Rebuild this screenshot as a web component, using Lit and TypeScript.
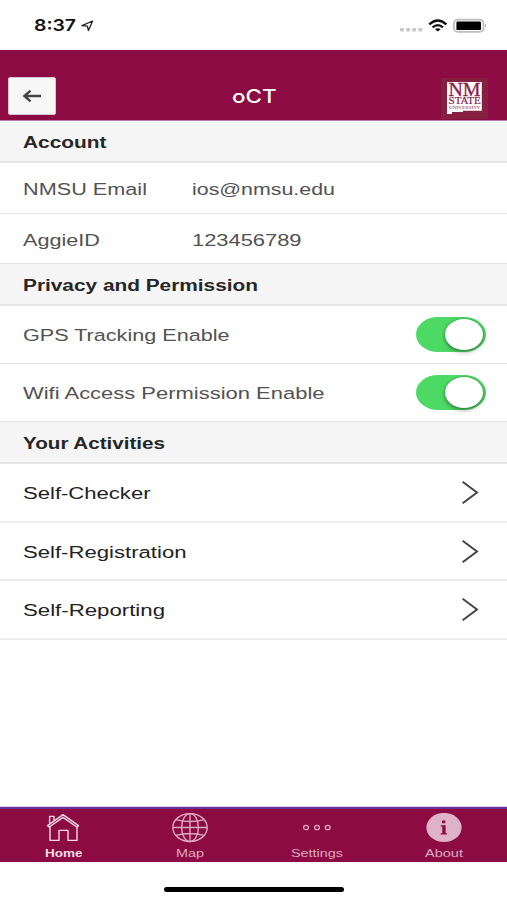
import { LitElement, html, svg, css } from "lit";
import { customElement, property } from "lit/decorators.js";

/* Wide label: real text fitted to a given advance width. */
@customElement("wide-label")
class WideLabel extends LitElement {
  @property() text = "";
  @property({ type: Number }) w = 100;
  @property({ type: Number }) h = 24;
  @property({ type: Number }) base = 18.8;
  static styles = css`
    :host { display: block; flex: none; }
    svg { display: block; overflow: visible; }
    text { fill: currentColor; }
  `;
  render() {
    return html`<svg width=${this.w} height=${this.h}>
      <text x="0" y=${this.base} textLength=${this.w} lengthAdjust="spacingAndGlyphs">${this.text}</text>
    </svg>`;
  }
}

const wide = (text: string, w: number, h = 24, base = 18.8) =>
  html`<wide-label .text=${text} .w=${w} .h=${h} .base=${base}></wide-label>`;

const homeIcon = svg`
  <g fill="none" stroke="#f3dce6" stroke-width="1.4" stroke-linejoin="round">
    <path d="M2.5 12.6 18 1.6 33.5 12.6 31.8 14 18 4.4 4.2 14Z"/>
    <path d="M4.6 10.6V3.4H9V7.6"/>
    <path d="M5 13.6V27.4H14V17.4H23V27.4H32V13.6"/>
  </g>`;
const globeIcon = svg`
  <g fill="none" stroke="#dca9c1" stroke-width="1.4">
    <ellipse cx="18" cy="14.5" rx="17.2" ry="14"/>
    <ellipse cx="18" cy="14.5" rx="8.4" ry="14"/>
    <path d="M18 .5V28.5M.8 14.5H35.2M3.8 6.6Q18 10.4 32.2 6.6M3.8 22.4Q18 18.6 32.2 22.4"/>
  </g>`;
const dotsIcon = svg`
  <g fill="none" stroke="#dca9c1" stroke-width="1.3">
    <ellipse cx="7" cy="14.5" rx="2.4" ry="2.2"/>
    <ellipse cx="18" cy="14.5" rx="2.4" ry="2.2"/>
    <ellipse cx="28.7" cy="14.5" rx="2.4" ry="2.2"/>
  </g>`;
const infoIcon = svg`
  <ellipse cx="18" cy="14.5" rx="17.6" ry="14.6" fill="#deb3c8"/>
  <ellipse cx="17.7" cy="8.8" rx="1.9" ry="1.6" fill="#8c0b42"/>
  <path d="M14.7 12.2H19.6V20.2H21V21.4H14.7V20.2H16.3V13.4H14.7Z" fill="#8c0b42"/>`;

const tabs = [
  { name: "Home", w: 37.5, icon: homeIcon, active: true },
  { name: "Map", w: 28, icon: globeIcon, active: false },
  { name: "Settings", w: 52, icon: dotsIcon, active: false },
  { name: "About", w: 38, icon: infoIcon, active: false },
];

@customElement("app-root")
class AppRoot extends LitElement {
  static styles = css`
    :host {
      display: flex; flex-direction: column; width: 507px; height: 900px;
      background: #fff; overflow: hidden;
      font-family: "Liberation Sans", Arial, sans-serif; font-size: 17.4px; color: #525252;
    }
    svg { display: block; flex: none; }
    .status {
      height: 50px; box-sizing: border-box; flex: none; display: flex; align-items: flex-start;
      padding: 13px 20px 0 34px; color: #111;
      font-family: Inter, sans-serif; font-weight: 600; font-size: 16px;
    }
    .spacer { flex: 1; }
    .loc { margin: 7px 0 0 5px; }
    .nav {
      height: 71px; flex: none; box-sizing: border-box; display: grid;
      grid-template-columns: 1fr auto 1fr; align-items: start;
      background: #8c0b42; border-bottom: 1px solid #b27fae; padding: 27px 19px 0 8px;
    }
    .back {
      width: 48px; height: 38px; padding: 0; border: 1px solid #d9c3cd; border-radius: 2px;
      background: #f7f7f7; display: flex; align-items: center; justify-content: center;
    }
    .title {
      color: #fff; font-family: Inter, sans-serif; font-weight: 500; font-size: 18.4px;
      margin: 7px 0 0 12px;
    }
    .logo { justify-self: end; margin-top: 1px; }
    .head, .row {
      box-sizing: border-box; flex: none; display: flex; align-items: center;
      padding: 0 21px 0 22.5px; border-bottom: 1px solid #e3e3e3;
    }
    .head {
      height: 42px; background: #f5f5f5; color: #262626; font-weight: 700; font-size: 17.2px;
      border-bottom: 2px solid #e6e6e6;
    }
    .short { height: 51px; }
    .last { height: 50px; }
    .switchrow { height: 58px; }
    .link { height: 58.5px; color: #222; padding-right: 28px; border-bottom: 2px solid #ededed; }
    .key { width: 169px; flex: none; }
    .switch {
      width: 70px; height: 35px; box-sizing: border-box; border-radius: 22px / 17.5px;
      background: #4cd964; padding: 2px 3px 2px 29px; flex: none; margin-top: -1px;
    }
    .knob {
      width: 38px; height: 31px; border-radius: 50%; background: #fff;
      box-shadow: 0 2px 4px rgba(0, 0, 0, .38), 0 0 2px rgba(0, 0, 0, .25);
    }
    .tabs {
      height: 55px; flex: none; box-sizing: border-box; display: grid;
      grid-template-columns: repeat(4, 1fr);
      background: #8c0b42; border-top: 2px solid #67309a; box-shadow: 0 -1px 0 #d9d2e0;
    }
    .tab {
      display: flex; flex-direction: column; align-items: center; padding-top: 4px;
      color: #dca9c1; font-size: 11.6px;
    }
    .active { color: #f3dce6; font-weight: 700; }
    .tab svg { margin-bottom: 3px; }
    .bottom { height: 38px; flex: none; display: flex; justify-content: center; }
    .bar { width: 180px; height: 5px; margin: 25px 0 0 1px; border-radius: 3px; background: #000; }
    .serif { font-family: "Liberation Serif", serif; fill: #8c1a48; }
  `;

  head(text: string, w: number) {
    return html`<div class="head">${wide(text, w)}</div>`;
  }
  toggle(text: string, w: number) {
    return html`<div class="row switchrow">${wide(text, w, 24, 18.2)}<span class="spacer"></span>
      <div class="switch"><div class="knob"></div></div></div>`;
  }
  link(text: string, w: number) {
    return html`<div class="row link">${wide(text, w, 24, 19)}<span class="spacer"></span>
      <svg width="18" height="24" fill="none" stroke="#444" stroke-width="2"><path d="M1.6 1.8 16 12.5 1.6 23.2"/></svg></div>`;
  }

  render() {
    return html`
      <div class="status">
        ${wide("8:37", 42, 24, 18.4)}
        <svg class="loc" width="13" height="12" fill="none" stroke="#222" stroke-width="1.3" stroke-linejoin="round"><path d="M.9 5.6 11.6 1 7.4 10.6 6.4 6.2Z"/></svg>
        <span class="spacer"></span>
        <svg width="88" height="24">
          <g fill="#c9c9c9"><rect x="1" y="15" width="4" height="3.4" rx="1"/><rect x="7.1" y="15" width="4" height="3.4" rx="1"/><rect x="13.2" y="15" width="4" height="3.4" rx="1"/><rect x="19.3" y="15" width="4" height="3.4" rx="1"/></g>
          <g fill="none" stroke="#111" stroke-width="2.3">
            <path d="M30.2 11.4Q38.8 3.6 47.4 11.4"/><path d="M33.6 14.3Q38.8 9.9 44 14.3"/>
          </g>
          <path d="M36 16.2Q38.8 14.2 41.6 16.2L38.8 18.6Z" fill="#111"/>
          <rect x="54.9" y="6.7" width="29.6" height="12.2" rx="4" fill="#fff" stroke="#bdbdbd" stroke-width="1.8"/>
          <rect x="57.4" y="8.6" width="24.6" height="8.5" rx="1.2" fill="#000"/>
          <path d="M86 10.6Q88 12.8 86 15Z" fill="#aaa"/>
        </svg>
      </div>
      <div class="nav">
        <button class="back"><svg width="20" height="14" fill="none" stroke="#444" stroke-width="2.4"><path d="M19 7H2.5M8.5 1.6 2.4 7 8.5 12.4"/></svg></button>
        <div class="title">${wide("oCT", 44.5, 24, 18.7)}</div>
        <svg class="logo" width="47" height="41">
          <rect width="47" height="41" fill="#85203f"/>
          <path d="M6 4H40.8V32.7H22V34H11V36H6Z" fill="#fff"/>
          <g class="serif">
            <text x="7.4" y="17.6" font-size="18" textLength="32.2" lengthAdjust="spacingAndGlyphs" stroke="#8c1a48" stroke-width=".3">NM</text>
            <text x="7.6" y="26.2" font-size="10.4" textLength="32" lengthAdjust="spacingAndGlyphs" stroke="#8c1a48" stroke-width=".2">STATE</text>
            <text x="8" y="30.6" font-size="4.4" textLength="31.4" lengthAdjust="spacingAndGlyphs">UNIVERSITY</text>
          </g>
        </svg>
      </div>
      ${this.head("Account", 83.5)}
      <div class="row short"><div class="key">${wide("NMSU Email", 124)}</div>${wide("ios@nmsu.edu", 143)}</div>
      <div class="row last"><div class="key">${wide("AggieID", 77)}</div>${wide("123456789", 109.5)}</div>
      ${this.head("Privacy and Permission", 235)}
      ${this.toggle("GPS Tracking Enable", 206.5)}
      ${this.toggle("Wifi Access Permission Enable", 301.5)}
      ${this.head("Your Activities", 142)}
      ${this.link("Self-Checker", 127.5)}
      ${this.link("Self-Registration", 163.5)}
      ${this.link("Self-Reporting", 142)}
      <div class="spacer"></div>
      <div class="tabs">
        ${tabs.map(t => html`<div class="tab ${t.active ? "active" : ""}">
          <svg width="36" height="30">${t.icon}</svg>${wide(t.name, t.w, 14, 11.2)}
        </div>`)}
      </div>
      <div class="bottom"><div class="bar"></div></div>
    `;
  }
}
